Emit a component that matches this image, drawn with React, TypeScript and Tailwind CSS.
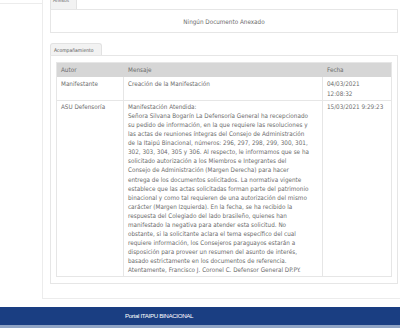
import React from "react";

const lines = [
  "Manifestación Atendida:",
  "Señora Silvana Bogarín La Defensoría General ha recepcionado",
  "su pedido de información, en la que requiere las resoluciones y",
  "las actas de reuniones íntegras del Consejo de Administración",
  "de la Itaipú Binacional, números: 296, 297, 298, 299, 300, 301,",
  "302, 303, 304, 305 y 306. Al respecto, le informamos que se ha",
  "solicitado autorización a los Miembros e Integrantes del",
  "Consejo de Administración (Margen Derecha) para hacer",
  "entrega de los documentos solicitados. La normativa vigente",
  "establece que las actas solicitadas forman parte del patrimonio",
  "binacional y como tal requieren de una autorización del mismo",
  "carácter (Margen Izquierda). En la fecha, se ha recibido la",
  "respuesta del Colegiado del lado brasileño, quienes han",
  "manifestado la negativa para atender esta solicitud. No",
  "obstante, si la solicitante aclara el tema específico del cual",
  "requiere información, los Consejeros paraguayos estarán a",
  "disposición para proveer un resumen del asunto de interés,",
  "basado estrictamente en los documentos de referencia.",
  "Atentamente, Francisco J. Coronel C. Defensor General DP.PY.",
];

export default function App() {
  return (
    <div
      className="w-[400px] h-[328px] overflow-hidden bg-white flex flex-col text-[#6b6b6b]"
      style={{ fontFamily: '"DejaVu Sans Condensed", "DejaVu Sans", sans-serif' }}
    >
      <div className="h-[307px] relative">
        <div className="absolute left-0 right-0 top-[3px] h-px bg-[#ececec]" />
        <div className="ml-[42px] w-[380px] -mt-[6px] h-[305px] border border-[#ececec] bg-white pl-[7px] pt-[1px] relative">
          {/* Anexos */}
          <div className="w-[348px]">
            <div className="w-[27px] h-[13px] border border-b-0 border-[#e2e2e2] rounded-t-[3px] bg-[#f2f2f2] text-[5px] leading-[6px] pl-[2px] overflow-hidden whitespace-nowrap">
              Anexos
            </div>
            <div className="h-[24px] border border-[#e6e6e6] flex items-center justify-center text-[6.3px] pt-[1px]">
              Ningún Documento Anexado
            </div>
          </div>
          {/* Acompañamiento */}
          <div className="w-[348px] mt-[10px]">
            <div className="w-[52px] h-[12px] border border-b-0 border-[#e2e2e2] rounded-t-[3px] bg-[#f2f2f2] text-[5px] leading-[12px] pl-[3px] whitespace-nowrap text-[#555]">
              Acompañamiento
            </div>
            <div className="border border-[#e6e6e6] px-[5px] pt-[6px] pb-[6px]">
              <div className="border border-[#e6e6e6] text-[6.3px]">
                <div className="flex h-[14px] bg-[#d6d6d6] leading-[14px]">
                  <div className="w-[67px] pl-[4px]">Autor</div>
                  <div className="w-[199px] pl-[4px]">Mensaje</div>
                  <div className="flex-1 pl-[4px]">Fecha</div>
                </div>
                <div className="flex h-[24px] border-b border-[#e6e6e6] leading-[9.5px]">
                  <div className="w-[67px] pl-[4px] pt-[2px] border-r border-[#e6e6e6]">Manifestante</div>
                  <div className="w-[199px] pl-[4px] pt-[2px] border-r border-[#e6e6e6]">Creación de la Manifestación</div>
                  <div className="flex-1 pl-[4px] pt-[2px]">
                    04/03/2021
                    <br />
                    12:08:32
                  </div>
                </div>
                <div className="flex h-[175px] leading-[9.06px]">
                  <div className="w-[67px] pl-[4px] pt-[1px] border-r border-[#e6e6e6]">ASU Defensoría</div>
                  <div className="w-[199px] pl-[4px] pt-[1px] border-r border-[#e6e6e6] whitespace-nowrap">
                    {lines.map((l, i) => (
                      <div key={i}>{l}</div>
                    ))}
                  </div>
                  <div className="flex-1 pl-[4px] pt-[1px] whitespace-nowrap">15/03/2021 9:29:23</div>
                </div>
              </div>
            </div>
          </div>
        </div>
      </div>
      <div className="h-[18px] bg-[#1a3e82] flex items-center pl-[125px]">
        <span
          className="text-white text-[6.2px] tracking-[-0.35px]"
          style={{ fontFamily: '"Liberation Sans", Arial, sans-serif' }}
        >
          Portal ITAIPU BINACIONAL
        </span>
      </div>
      <div className="h-[3px] bg-[#8fa3c4]" />
    </div>
  );
}
